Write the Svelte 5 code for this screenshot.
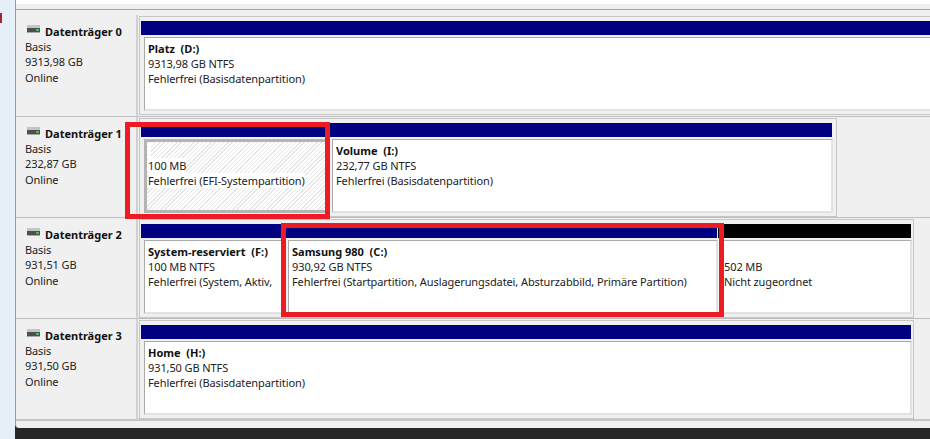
<script>
  const disks = [
    { name: 'Datenträger 0', size: '9313,98 GB', first: true, trackWidth: 800,
      parts: [{ width: 800, title: 'Platz  (D:)', lines: ['9313,98 GB NTFS', 'Fehlerfrei (Basisdatenpartition)'] }] },
    { name: 'Datenträger 1', size: '232,87 GB', trackWidth: 698,
      parts: [
        { width: 188, kind: 'hatch', title: '', lines: ['100 MB', 'Fehlerfrei (EFI-Systempartition)'] },
        { width: 504, title: 'Volume  (I:)', lines: ['232,77 GB NTFS', 'Fehlerfrei (Basisdatenpartition)'] }
      ] },
    { name: 'Datenträger 2', size: '931,51 GB', trackWidth: 775,
      parts: [
        { width: 144, title: 'System-reserviert  (F:)', lines: ['100 MB NTFS', 'Fehlerfrei (System, Aktiv,'] },
        { width: 433, title: 'Samsung 980  (C:)', lines: ['930,92 GB NTFS', 'Fehlerfrei (Startpartition, Auslagerungsdatei, Absturzabbild, Primäre Partition)'] },
        { width: 194, kind: 'free', title: '', lines: ['502 MB', 'Nicht zugeordnet'] }
      ] },
    { name: 'Datenträger 3', size: '931,50 GB', trackWidth: 775,
      parts: [{ width: 771, title: 'Home  (H:)', lines: ['931,50 GB NTFS', 'Fehlerfrei (Basisdatenpartition)'] }] }
  ];
</script>

<div class="page">
  <aside class="strip"><span class="mark"></span></aside>
  <main class="window">
    <div class="topbar"></div>
    {#each disks as d}
      <section class="disk" class:first={d.first}>
        <div class="label">
          <div class="head">
            <svg class="icon" width="13" height="8" viewBox="0 0 13 8" aria-hidden="true">
              <rect x="0" y="0" width="13" height="3" fill="#c4c4c4" />
              <rect x="0" y="3" width="13" height="4" fill="#4c4f4e" />
              <rect x="9" y="4" width="3" height="2" fill="#43c24a" />
              <rect x="0" y="7" width="13" height="1" fill="#a8a8a8" />
            </svg>
            <b>{d.name}</b>
          </div>
          <div>Basis</div>
          <div>{d.size}</div>
          <div>Online</div>
        </div>
        <div class="track" style="width: {d.trackWidth}px">
          {#each d.parts as p}
            <div class="part" style="width: {p.width}px">
              <div class="bar" class:black={p.kind === 'free'}></div>
              <div class="box" class:hatch={p.kind === 'hatch'} class:free={p.kind === 'free'}>
                <div class="t title"><span>{p.title || '\u00a0'}</span></div>
                {#each p.lines as l}
                  <div class="t"><span>{l}</span></div>
                {/each}
              </div>
            </div>
          {/each}
        </div>
      </section>
    {/each}
    <div class="rest"></div>
  </main>
  <div class="footer"></div>
  <div class="red one"></div>
  <div class="red two"></div>
</div>

<style>
  :global(body) { margin: 0; background: #fff; }
  .page {
    position: relative;
    width: 930px;
    height: 439px;
    overflow: hidden;
    background: #e6eff7;
    font: 11px/15.4px "Noto Sans", "Open Sans", sans-serif;
    letter-spacing: -0.1px;
    color: #222;
  }
  .strip { position: absolute; left: 0; top: 0; width: 15px; height: 439px; }
  .mark { position: absolute; left: 0; top: 13px; width: 2px; height: 10px; background: #a3262a; }
  .window {
    position: relative;
    z-index: 1;
    margin-left: 15px;
    height: 428px;
    background: #f0f0f0;
    border-left: 1px solid #9a9a9a;
    border-bottom-left-radius: 4px;
    box-sizing: border-box;
    overflow: hidden;
    display: flex;
    flex-direction: column;
  }
  .topbar {
    height: 10px;
    flex: none;
    box-sizing: border-box;
    background: linear-gradient(#fff 4px, #efefef 4px);
    border-bottom: 1px solid #a4a4a4;
  }
  .disk {
    display: flex;
    height: 101px;
    flex: none;
    box-sizing: border-box;
    border-bottom: 1px solid #bdbdbd;
  }
  .disk.first { height: 107px; padding-top: 5px; }
  .disk:last-of-type { height: 102px; border-bottom: 2px solid #c4c4c4; }
  .label {
    width: 122px;
    flex: none;
    box-sizing: border-box;
    padding: 9px 0 0 9px;
    border-right: 2px solid #d0d0d0;
    margin-right: 1px;
    margin-bottom: -1px;
  }
  .head { display: flex; align-items: center; height: 15px; letter-spacing: 0; }
  .icon { margin: -6px 5px 0 2px; flex: none; }
  .head b { font-weight: 700; color: #111; }
  .track {
    display: flex;
    flex: none;
    box-sizing: border-box;
    height: 99px;
    margin-top: 1px;
    padding: 4px 3px 0 1px;
    border: 1px solid #c6c6c6;
    background: #f0f0f0;
  }
  .part { flex: none; display: flex; flex-direction: column; }
  .bar { height: 14px; background: #000080; flex: none; margin-right: 1px; }
  .bar.black { background: #000; }
  .box {
    height: 74px;
    margin-top: 2px;
    box-sizing: border-box;
    padding: 2.5px 4px 0 3px;
    margin-left: 3px;
    background: #fff;
    border: 1px solid #e2e2e2;
    border-top-color: #a9a9a9;
    border-left-color: #a9a9a9;
    border-right: 2px solid #e2e2e2;
    border-bottom: 2px solid #e2e2e2;
    overflow: hidden;
  }
  .box.free { border-left: 0; }
  .box.hatch {
    border: 3px solid #b4b4b4;
    padding: 0.5px 2px 0 1px;
    background: repeating-linear-gradient(135deg, #e6e6e6 0 1px, #fff 1px 3px);
  }
  .t { white-space: pre; }
  .t span { background: #fff; }
  .title { font-weight: 700; color: #111; letter-spacing: 0; }
  .rest { flex: 1; }
  .footer { position: absolute; left: 15px; right: 0; top: 422px; bottom: 0; background: #272727; }
  .red { position: absolute; z-index: 2; box-sizing: border-box; border: 5px solid #ed1c24; }
  .one { left: 125px; top: 122px; width: 205px; height: 97px; }
  .two { left: 281px; top: 223px; width: 443px; height: 94px; }
</style>
